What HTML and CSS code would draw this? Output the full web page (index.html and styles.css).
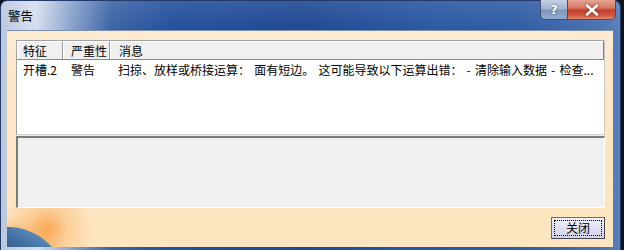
FILE: index.html
```html
<!DOCTYPE html>
<html lang="zh-CN">
<head>
<meta charset="utf-8">
<title>警告</title>
<link rel="stylesheet" href="styles.css">
</head>
<body>
<div class="window">
  <div class="titlebar">
    <div class="title">警告</div>
    <div class="caption-buttons">
      <div class="cap-btn help">?</div>
      <div class="cap-btn close">
        <svg width="14" height="12" viewBox="0 0 14 12"><path d="M2 1.5 L12 10.5 M12 1.5 L2 10.5" stroke="#fff" stroke-width="2.6" stroke-linecap="round"/></svg>
      </div>
    </div>
  </div>
  <div class="client">
    <div class="globe"></div>
    <div class="list">
      <div class="list-header">
        <div class="hcell col1">特征</div>
        <div class="hcell col2">严重性</div>
        <div class="hcell col3">消息</div>
      </div>
      <div class="list-row">
        <div class="cell col1">开槽.2</div>
        <div class="cell col2">警告</div>
        <div class="cell col3">扫掠、放样或桥接运算： 面有短边。 这可能导致以下运算出错： - 清除输入数据 - 检查...</div>
      </div>
    </div>
    <div class="details"></div>
    <div class="footer">
      <button class="btn"><span class="btn-focus">关闭</span></button>
    </div>
  </div>
</div>
</body>
</html>
```
FILE: styles.css
```css
html, body {
  margin: 0;
  padding: 0;
}
body {
  background: #10131c;
  width: 624px;
  height: 250px;
  overflow: hidden;
  font-family: "Noto Sans CJK SC", "Noto Sans", sans-serif;
  font-size: 12px;
}
.window {
  width: 621px;
  height: 250px;
  display: flex;
  flex-direction: column;
  border-radius: 7px 7px 0 0;
  box-sizing: border-box;
  border: 1px solid #233a6a;
  border-bottom: none;
  background:
    linear-gradient(180deg, rgba(255,255,255,0.10) 0, rgba(255,255,255,0) 30px),
    linear-gradient(90deg, #b9c8df 0, #d6dfee 35px, #8aa3cc 70px, #3c64a6 110px, #23509c 170px, #1f4893 300px, #2a58a2 430px, #2f5ca4 520px, #4a72b2 600px, #5b80bb 621px);
}
.titlebar {
  height: 29px;
  display: flex;
  align-items: flex-start;
  padding: 0 4px 0 7px;
}
.title {
  margin-top: 6px;
  line-height: 18px;
  font-size: 12.5px;
  color: #000;
}
.caption-buttons {
  margin-left: auto;
  display: flex;
  margin-top: -1px;
}
.cap-btn {
  height: 20px;
  box-sizing: border-box;
  display: flex;
  align-items: center;
  justify-content: center;
  border: 1px solid #3a4f78;
  border-top: none;
}
.help {
  width: 27px;
  border-radius: 0 0 0 5px;
  border-right: none;
  background: linear-gradient(180deg, #c4d1e4 0, #a2b4d0 45%, #7f97bd 55%, #93abcf 100%);
  color: #fff;
  font-family: "DejaVu Sans", sans-serif;
  font-weight: bold;
  font-size: 13px;
  text-shadow: 0 0 2px #2d4470;
}
.close {
  width: 49px;
  border-radius: 0 0 5px 0;
  background: linear-gradient(180deg, #e6a595 0, #d77a66 40%, #c2402c 55%, #d0563c 80%, #e08a6c 100%);
}
.close svg {
  filter: drop-shadow(0 0 1px #6a1a10);
}
.client {
  flex: 1;
  position: relative;
  overflow: hidden;
  margin: 0 7px 3px 6px;
  box-sizing: border-box;
  padding: 9px 8px 8px 9px;
  display: flex;
  flex-direction: column;
  border-top: 1px solid #7d8fb0;
  background:
    radial-gradient(circle 46px at 40px 198px, rgba(248,158,66,0.85) 0, rgba(250,188,118,0.55) 45%, rgba(253,230,194,0) 100%),
    linear-gradient(180deg, #fdebd2 0, #fde6c4 60px, #fde5c0 100%);
}
.globe {
  position: absolute;
  left: -57px;
  top: 196px;
  width: 116px;
  height: 116px;
  border-radius: 50%;
  background:
    radial-gradient(circle at 50% 50%, rgba(0,0,0,0) 0, rgba(0,0,0,0) 88%, rgba(120,185,225,0.9) 94%, rgba(205,236,248,1) 98%, rgba(240,200,150,0.8) 100%),
    linear-gradient(30deg, #1a1f2a 0, #252c3a 45%, #34465e 60%, #3d6a98 75%, #5b93c4 90%);
  box-shadow: 0 0 10px 3px rgba(248,170,90,0.55);
}
.list {
  position: relative;
  height: 96px;
  box-sizing: border-box;
  border: 1px solid #a3a3a3;
  border-right-color: #c8c8c8;
  border-bottom-color: #d4d4d4;
  background: #fff;
}
.list-header {
  display: flex;
  height: 19px;
  box-sizing: border-box;
  background: #f0f0f0;
  border-bottom: 1px solid #8a8a8a;
}
.hcell {
  box-sizing: border-box;
  height: 18px;
  line-height: 17px;
  color: #000;
  border-top: 1px solid #fff;
  border-left: 1px solid #fff;
  border-right: 1px solid #9a9a9a;
}
.col1 { width: 46px; padding-left: 5px; flex: none; }
.col2 { width: 47px; padding-left: 7px; flex: none; }
.col3 { flex: 1; padding-left: 8px; white-space: nowrap; overflow: hidden; }
.hcell.col3 { border-right: 1px solid #7a7a7a; }
.list-row {
  display: flex;
  height: 18px;
  line-height: 19px;
  color: #000;
}
.cell {
  box-sizing: border-box;
}
.cell.col1 { padding-left: 6px; }
.cell.col2 { padding-left: 8px; }
.cell.col3 { padding-left: 8px; word-spacing: 1.5px; }
.details {
  position: relative;
  margin-top: 1px;
  height: 72px;
  box-sizing: border-box;
  background: #f0f0f0;
  border-top: 2px solid #7c7c7c;
  border-left: 2px solid #7c7c7c;
  border-right: 1px solid #ffffff;
  border-bottom: 1px solid #ffffff;
}
.footer {
  position: relative;
  display: flex;
  justify-content: flex-end;
  margin-top: 9px;
}
.btn {
  width: 54px;
  height: 22px;
  box-sizing: border-box;
  padding: 2px;
  margin: 0;
  border: 1px solid #6a6a78;
  border-right-color: #44444e;
  border-bottom-color: #44444e;
  background: linear-gradient(180deg, #f2f2fa 0, #e0e0f2 50%, #d2d2ea 100%);
  font-family: "Noto Sans CJK SC", sans-serif;
  font-size: 12px;
  color: #000;
  display: flex;
}
.btn-focus {
  flex: 1;
  border: 1px dotted #000;
  display: flex;
  align-items: center;
  justify-content: center;
  line-height: 14px;
}
```
